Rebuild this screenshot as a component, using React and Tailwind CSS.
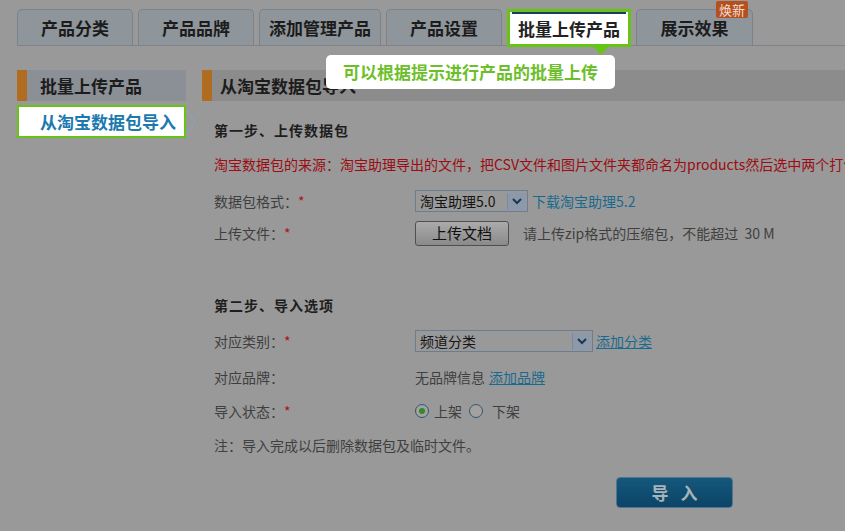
import React from "react";

const font = { fontFamily: '"Noto Sans CJK SC", "Liberation Sans", sans-serif' };

function Tab({ w, children }) {
  return (
    <div
      className={`${w} h-[36px] rounded-t-[5px] border border-b-0 border-[#7b8288] bg-[#8e959b] flex items-center justify-center text-[17px] font-bold text-[#1c1c1c] leading-none`}
    >
      {children}
    </div>
  );
}

function Star() {
  return <span className="text-[#a8141e]">*</span>;
}

function Arrow() {
  return (
    <div className="w-[19px] h-[17px] bg-[#8c99ab] border-l border-[#7c8aa0] flex items-center justify-center">
      <svg width="10" height="7" viewBox="0 0 10 7">
        <path d="M1 1 L5 5 L9 1" fill="none" stroke="#1f3550" strokeWidth="2" />
      </svg>
    </div>
  );
}

export default function App() {
  return (
    <div className="relative w-[845px] h-[531px] overflow-hidden bg-[#999999]" style={font}>
      {/* Tabs */}
      <div className="ml-[17px] pt-[9px] flex items-start gap-[5px] h-[46px] border-b border-[#7d8388]">
        <Tab w="w-[116px]">产品分类</Tab>
        <Tab w="w-[116px]">产品品牌</Tab>
        <Tab w="w-[122px]">添加管理产品</Tab>
        <Tab w="w-[116px]">产品设置</Tab>
        <div className="relative z-10 w-[124px] h-[38px] border-[3px] border-[#66c514] bg-white flex items-center justify-center text-[17px] font-bold text-[#222] leading-none">
          <div className="absolute left-[2px] right-[2px] top-0 h-[2px] bg-[#1d3b5c]" />
          批量上传产品
        </div>
        <Tab w="w-[117px]">展示效果</Tab>
      </div>

      {/* Badge */}
      <div className="absolute left-[716px] top-[1px] w-[32px] h-[17px] bg-[#b5501e] rounded-[2px] text-[13px] leading-[17px] text-[#f3dccf] text-center">
        焕新
      </div>

      {/* Tooltip */}
      <div className="absolute left-[593px] top-[46px] w-0 h-0 border-l-[8px] border-r-[8px] border-t-[9px] border-l-transparent border-r-transparent border-t-[#66c514]" />
      <div className="absolute left-[326px] top-[55px] w-[289px] h-[34px] bg-white rounded-[5px] flex items-center justify-center text-[17px] font-bold text-[#6cbf2a]">
        可以根据提示进行产品的批量上传
      </div>

      {/* Body */}
      <div className="flex mt-[24px]">
        {/* Left nav */}
        <div className="ml-[17px] w-[169px] shrink-0">
          <div className="h-[31px] flex">
            <div className="w-[10px] bg-[#b06d22]" />
            <div className="flex-1 bg-[#8a9095] flex items-center pl-[13px] text-[17px] font-bold text-[#1c1c1c]">
              批量上传产品
            </div>
          </div>
          <div className="relative mt-[4px] h-[33px] border-2 border-[#66c514] bg-white flex items-center pl-[21px] text-[17px] font-bold text-[#1b79b0]">
            从淘宝数据包导入
            <svg className="absolute -right-[13px] top-[2px]" width="12" height="26" viewBox="0 0 12 26">
              <path d="M1 1 L10 13 L1 25" fill="none" stroke="#8ea2b8" strokeWidth="1.2" />
            </svg>
          </div>
        </div>

        {/* Content */}
        <div className="ml-[16px] flex-1 min-w-0">
          <div className="h-[31px] flex">
            <div className="w-[10px] bg-[#b06d22]" />
            <div className="flex-1 bg-[#8c8c8c] flex items-center pl-[8px] text-[17px] font-bold text-[#1c1c1c]">
              从淘宝数据包导入
            </div>
          </div>

          <div className="pl-[12px] text-[14px] text-[#3f3f3f]">
            <div className="h-[20px] mt-[19px] flex items-center font-bold text-[#1e1e1e] tracking-[1px]">第一步、上传数据包</div>

            <div className="h-[20px] mt-[14px] flex items-center whitespace-nowrap text-[#9c0c12]">
              淘宝数据包的来源：淘宝助理导出的文件，把CSV文件和图片文件夹都命名为products然后选中两个打包
            </div>

            <div className="h-[22px] mt-[16px] flex items-center">
              <div className="w-[201px]">数据包格式：<Star /></div>
              <div className="w-[113px] h-[22px] border border-[#6a7d93] flex items-center justify-between pl-[4px] pr-[1px] text-[#141414]">
                <span>淘宝助理5.0</span>
                <Arrow />
              </div>
              <span className="ml-[4px] text-[#1a6a8e]">下载淘宝助理5.2</span>
            </div>

            <div className="h-[25px] mt-[9px] flex items-center">
              <div className="w-[201px]">上传文件：<Star /></div>
              <div className="w-[94px] h-[25px] border border-[#4f4f4f] rounded-[3px] bg-gradient-to-b from-[#ababab] to-[#8a8a8a] flex items-center justify-center text-[15px] text-[#111]">
                上传文档
              </div>
              <span className="ml-[14px]">请上传zip格式的压缩包，不能超过&nbsp;&nbsp;30 M</span>
            </div>

            <div className="h-[20px] mt-[49px] flex items-center font-bold text-[#1e1e1e] tracking-[1px]">第二步、导入选项</div>

            <div className="h-[22px] mt-[15px] flex items-center">
              <div className="w-[201px]">对应类别：<Star /></div>
              <div className="w-[178px] h-[22px] border border-[#6a7d93] flex items-center justify-between pl-[4px] pr-[1px] text-[#141414]">
                <span>频道分类</span>
                <Arrow />
              </div>
              <span className="ml-[3px] text-[#1a6a8e] underline">添加分类</span>
            </div>

            <div className="h-[20px] mt-[15px] flex items-center">
              <div className="w-[201px]">对应品牌：</div>
              <span>无品牌信息</span>
              <span className="ml-[4px] text-[#1a6a8e] underline">添加品牌</span>
            </div>

            <div className="h-[20px] mt-[14px] flex items-center">
              <div className="w-[201px]">导入状态：<Star /></div>
              <span className="w-[14px] h-[14px] rounded-full border border-[#35556d] bg-[#a2a2a2] flex items-center justify-center">
                <span className="w-[6px] h-[6px] rounded-full bg-[#2f8a2a]" />
              </span>
              <span className="ml-[5px]">上架</span>
              <span className="ml-[7px] w-[14px] h-[14px] rounded-full border border-[#35556d] bg-[#a2a2a2]" />
              <span className="ml-[9px]">下架</span>
            </div>

            <div className="h-[20px] mt-[14px] flex items-center">注：导入完成以后删除数据包及临时文件。</div>

            <div className="mt-[22px] ml-[402px] w-[117px] h-[31px] rounded-[4px] border border-[#4f7592] bg-gradient-to-b from-[#14587c] to-[#0c4466] flex items-center justify-center text-[17px] font-bold text-[#a9b3ba] tracking-[12px] pl-[12px]">
              导入
            </div>
          </div>
        </div>
      </div>
    </div>
  );
}
